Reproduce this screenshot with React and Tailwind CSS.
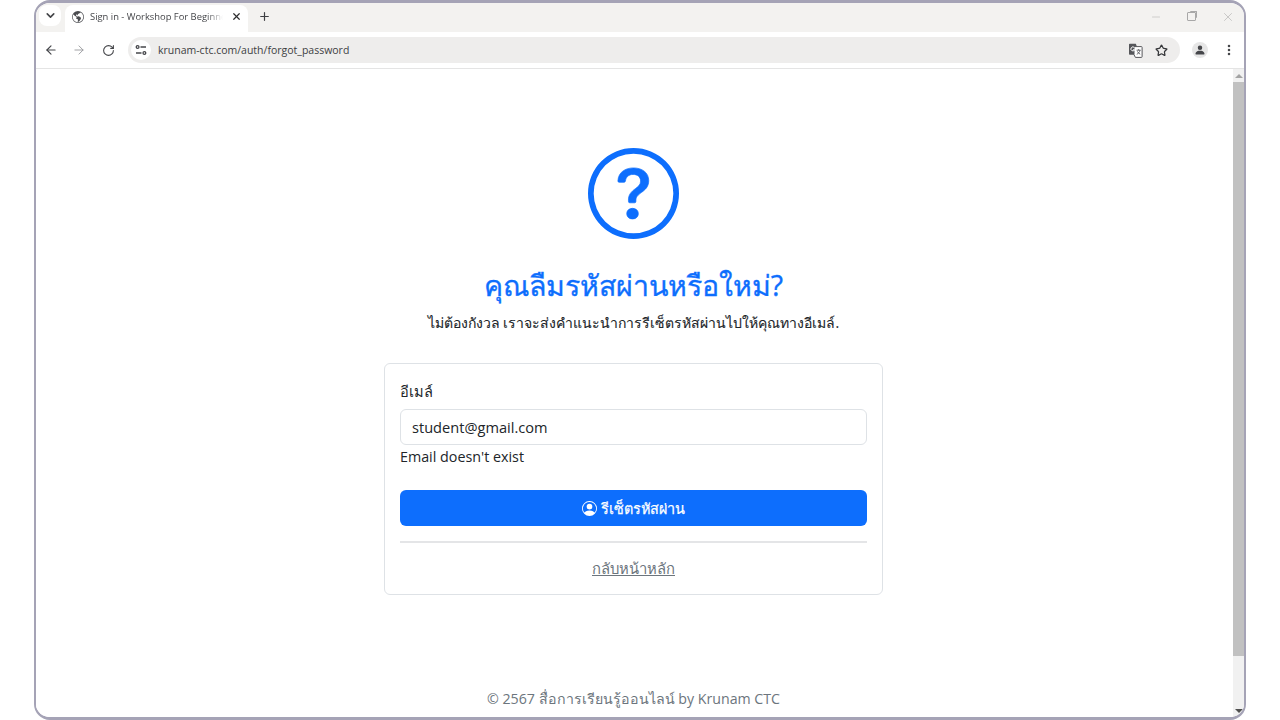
import React from "react";
import { ArrowLeft, ArrowRight, RotateCw, Star, Plus, X, Minus, ChevronDown, EllipsisVertical } from "lucide-react";
import { BsPersonCircle, BsGlobeAmericas, BsPersonFill } from "react-icons/bs";

function QuestionIcon() {
  return (
    <svg width="91" height="91" viewBox="0 0 16 16" fill="currentColor" className="text-[#0d6efd]">
      <path d="M8 15A7 7 0 1 1 8 1a7 7 0 0 1 0 14m0 1A8 8 0 1 0 8 0a8 8 0 0 0 0 16" />
      <path
        stroke="currentColor"
        strokeWidth="0.12"
        d="M5.255 5.786a.237.237 0 0 0 .241.247h.825c.138 0 .248-.113.266-.25.09-.656.54-1.134 1.342-1.134.686 0 1.314.343 1.314 1.168 0 .635-.374.927-.965 1.371-.673.489-1.206 1.06-1.168 1.987l.003.217a.25.25 0 0 0 .25.246h.811a.25.25 0 0 0 .25-.25v-.105c0-.718.273-.927 1.01-1.486.609-.463 1.244-.977 1.244-2.056 0-1.511-1.276-2.241-2.673-2.241-1.267 0-2.655.59-2.75 2.286m1.557 5.763c0 .533.425.927 1.01.927.609 0 1.028-.394 1.028-.927 0-.552-.42-.94-1.029-.94-.584 0-1.009.388-1.009.94"
      />
    </svg>
  );
}

function SiteInfoIcon() {
  return (
    <svg width="12" height="12" viewBox="0 0 12 12" fill="none" stroke="#45464a" strokeWidth="1.3">
      <circle cx="2.6" cy="3" r="1.4" />
      <path d="M5.5 3H11" />
      <path d="M1 9h5.5" />
      <circle cx="9.4" cy="9" r="1.4" />
    </svg>
  );
}

function TranslateIcon() {
  return (
    <svg width="15" height="15" viewBox="0 0 15 15">
      <path d="M1 1.5A.8.8 0 0 1 1.8.7h6l1.2 3v8H1.8a.8.8 0 0 1-.8-.8z" fill="#55565a" />
      <path d="M6 3.6h7.4a.7.7 0 0 1 .7.7v9.4a.7.7 0 0 1-.7.7H7.4L6 11.7z" fill="#fff" stroke="#55565a" strokeWidth="1" />
      <path d="M6.4 4.6a2 2 0 1 0 .3 2.2H5" fill="none" stroke="#fff" strokeWidth="1" />
      <path d="M8.6 7.2h4M10.6 6.2v1M12 7.2c-.4 2-1.700 3.400-3.200 4M9.400 8.400c.6 1.200 1.600 2.200 2.800 2.800" fill="none" stroke="#55565a" strokeWidth="0.9" />
    </svg>
  );
}

function Tabs() {
  return (
    <div className="flex h-[29px] items-end bg-[#f3f2f0] pl-[3px] text-[#45464a]">
      <div className="mb-[6px] flex h-[21px] w-[22px] items-center justify-center rounded-lg bg-white">
        <ChevronDown size={13} strokeWidth={3} />
      </div>
      <div className="ml-[4px] flex h-[27px] w-[183px] items-center rounded-t-lg bg-white pr-[6px] pb-[4px] pl-[7px]">
        <BsGlobeAmericas size={12} className="shrink-0 text-[#4a4b4f]" />
        <div className="ml-[6px] w-[133px] overflow-hidden pt-[1px] text-[9.4px] whitespace-nowrap [mask-image:linear-gradient(to_right,black_88%,transparent)]">
          Sign in - Workshop For Beginners
        </div>
        <X size={11} strokeWidth={2.6} className="ml-auto shrink-0 text-[#2c2c2e]" />
      </div>
      <div className="ml-[10px] flex h-[27px] items-center pb-[4px]">
        <Plus size={13} strokeWidth={2.2} className="text-[#3f4044]" />
      </div>
      <div className="mr-[9px] ml-auto flex h-[27px] items-center gap-[25px] pb-[4px] text-[#a8a8a8]">
        <Minus size={12} strokeWidth={1} />
        <div className="relative h-[9px] w-[9px] rounded-[1px] border border-[#a8a8a8]">
          <div className="absolute -top-[2px] -right-[2px] h-[7px] w-[7px] rounded-[1px] border-t border-r border-[#a8a8a8]"></div>
        </div>
        <X size={14} strokeWidth={1} />
      </div>
    </div>
  );
}

function Toolbar() {
  return (
    <div className="flex h-[37px] items-center border-b border-[#e4e4e4] bg-white pl-[8px]">
      <ArrowLeft size={14} strokeWidth={2} className="shrink-0 text-[#45464a]" />
      <ArrowRight size={14} strokeWidth={1.6} className="ml-[14px] shrink-0 text-[#9a9b9e]" />
      <RotateCw size={13} strokeWidth={2} className="ml-[16px] shrink-0 text-[#45464a]" />
      <div className="ml-[13px] flex h-[26px] w-[1052px] shrink-0 items-center rounded-full bg-[#eeedec] pr-[12px] pl-[3px]">
        <div className="flex h-[20px] w-[20px] items-center justify-center rounded-full bg-white">
          <SiteInfoIcon />
        </div>
        <span className="ml-[7px] pt-[1px] text-[10.5px] text-[#3d3e42]">krunam-ctc.com/auth/forgot_password</span>
        <div className="ml-auto flex items-center gap-[12px]">
          <TranslateIcon />
          <Star size={13} strokeWidth={2.3} className="text-[#36373a]" />
        </div>
      </div>
      <div className="ml-[12px] flex h-[16px] w-[16px] shrink-0 items-center justify-center rounded-full bg-[#e6e6e6]">
        <BsPersonFill size={12} className="text-[#45464a]" />
      </div>
      <EllipsisVertical size={14} strokeWidth={2.4} className="ml-[14px] shrink-0 text-[#45464a]" />
    </div>
  );
}

function Scrollbar() {
  return (
    <div className="flex w-[11px] shrink-0 flex-col bg-[#f1f1f1]">
      <div className="flex h-[13px] items-center justify-center">
        <div className="h-0 w-0 border-x-[4px] border-b-[4px] border-x-transparent border-b-[#a3a3a3]"></div>
      </div>
      <div className="h-[574px] bg-[#c1c1c1]"></div>
      <div className="mt-auto flex h-[13px] items-center justify-center">
        <div className="h-0 w-0 border-x-[4px] border-t-[4px] border-x-transparent border-t-[#505050]"></div>
      </div>
    </div>
  );
}

function ForgotForm() {
  return (
    <div className="flex min-w-0 flex-1 flex-col items-center bg-white pt-[79px] pr-[2px] text-[#212529]">
      <QuestionIcon />
      <h1 className="mt-[22px] text-[28.5px] leading-[48px] font-medium text-[#0d6efd] [-webkit-text-stroke:0.35px_#0d6efd]">คุณลืมรหัสผ่านหรือใหม่?</h1>
      <p className="mt-[2px] text-[14px] leading-[24px] text-[#212529] [-webkit-text-stroke:0.1px_#212529]">ไม่ต้องกังวล เราจะส่งคำแนะนำการรีเซ็ตรหัสผ่านไปให้คุณทางอีเมล์.</p>

      <div className="mt-[28px] w-[499px] rounded-[6px] border border-[#dee2e6] px-[15px] pt-[15px] pb-[14px]">
        <label className="block text-[14.6px] leading-[24px] text-[#212529]">อีเมล์</label>
        <div className="mt-[6px] flex h-[36px] items-center rounded-[6px] border border-[#dee2e6] px-[11px] pt-[2px] text-[14.6px] text-[#212529]">
          student@gmail.com
        </div>
        <div className="text-[14.3px] leading-[24px] text-[#212529]">Email doesn't exist</div>
        <button className="mt-[21px] flex h-[36px] w-full items-center justify-center gap-[4px] rounded-[6px] bg-[#0d6efd] text-[14.4px] font-medium text-white [-webkit-text-stroke:0.25px_#fff]">
          <BsPersonCircle size={15} />
          <span className="pt-[2px]">รีเซ็ตรหัสผ่าน</span>
        </button>
        <hr className="mt-[15px] border-t-2 border-[#e4e5e7]" />
        <div className="mt-[13px] text-center">
          <a href="#" className="text-[14.8px] leading-[24px] text-[#6c757d] underline">กลับหน้าหลัก</a>
        </div>
      </div>

      <p className="mt-auto mb-[6px] text-[14.2px] leading-[24px] text-[#6c757d]">© 2567 สื่อการเรียนรู้ออนไลน์ by Krunam CTC</p>
    </div>
  );
}

export default function App() {
  return (
    <div className="h-[720px] overflow-hidden bg-white px-[34px] font-['Open_Sans','Noto_Sans',sans-serif]">
      <div className="flex h-[720px] flex-col overflow-hidden rounded-[16px] border-x-2 border-y-[3px] border-[#a5a3b6]">
        <Tabs />
        <Toolbar />
        <div className="flex min-h-0 flex-1">
          <ForgotForm />
          <Scrollbar />
        </div>
      </div>
    </div>
  );
}
